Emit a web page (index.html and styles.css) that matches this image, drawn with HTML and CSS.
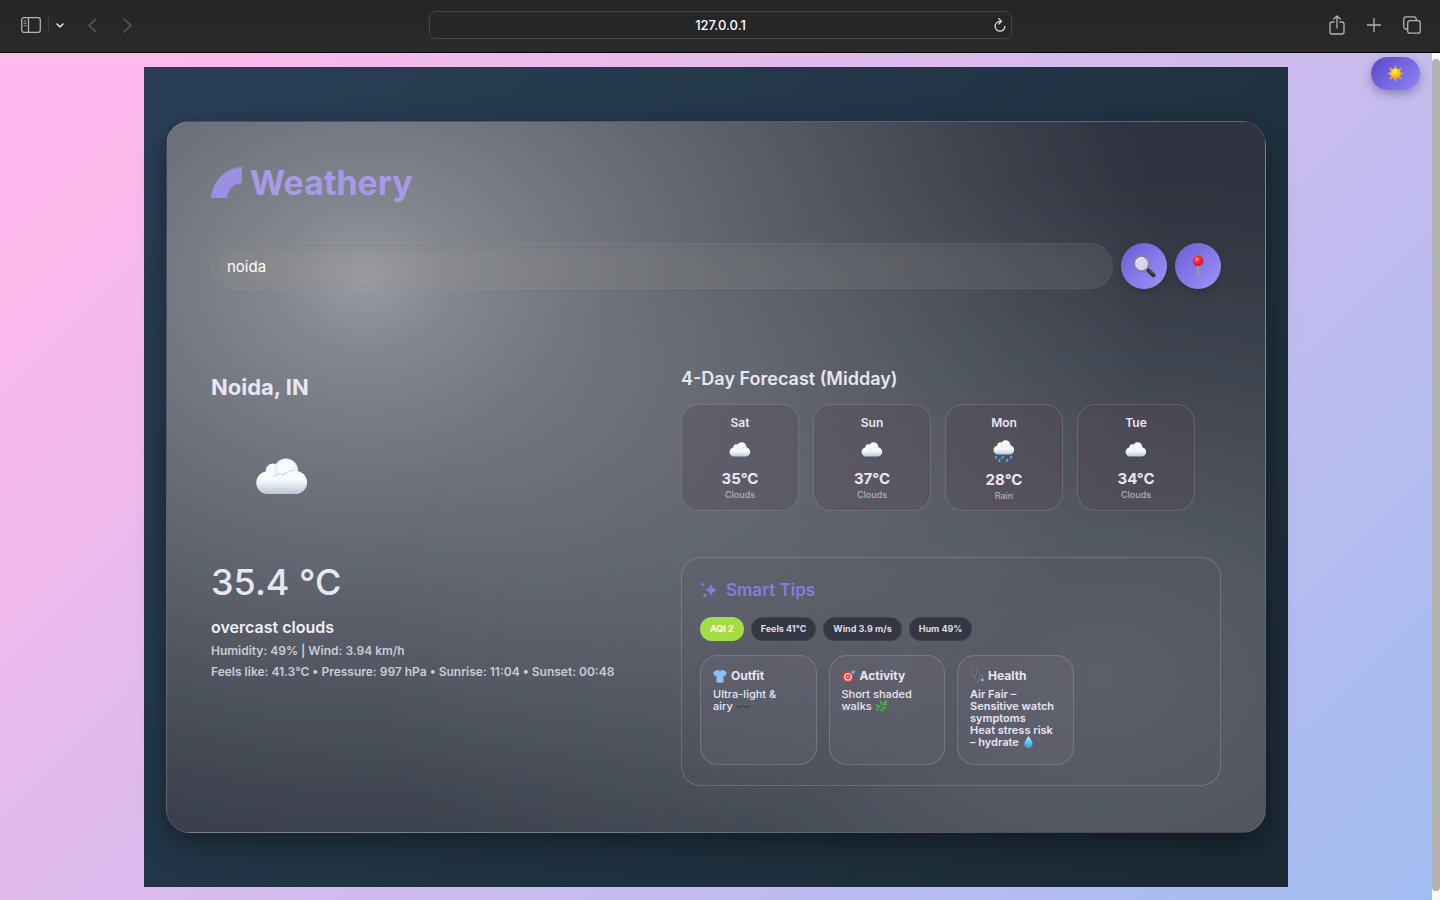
FILE: index.html
```html
<!DOCTYPE html>
<html lang="en">
<head>
<meta charset="utf-8">
<title>Weathery</title>
<link rel="stylesheet" href="styles.css">
</head>
<body>
<svg class="defs" aria-hidden="true">
  <defs>
    <radialGradient id="puff" cx=".5" cy=".4" r=".65"><stop offset=".4" stop-color="#fafcfc"/><stop offset="1" stop-color="#d6e0e7"/></radialGradient>
    <linearGradient id="base" gradientUnits="userSpaceOnUse" x1="0" y1="13" x2="0" y2="36"><stop offset=".4" stop-color="#f8fafb"/><stop offset="1" stop-color="#b9c8d3"/></linearGradient>
    <radialGradient id="sun" cx=".45" cy=".3" r=".75"><stop offset="0" stop-color="#fff23a"/><stop offset=".5" stop-color="#ffcc12"/><stop offset="1" stop-color="#f48a10"/></radialGradient>
    <radialGradient id="pin" cx=".4" cy=".35" r=".65"><stop offset="0" stop-color="#ff9a90"/><stop offset=".35" stop-color="#f2383a"/><stop offset="1" stop-color="#c8161c"/></radialGradient>
    <linearGradient id="drop" x1="0" y1="0" x2="0" y2="1"><stop offset="0" stop-color="#b6f0ff"/><stop offset="1" stop-color="#159be6"/></linearGradient>
    <symbol id="cloud" viewBox="0 0 54 37">
      <circle cx="18" cy="13" r="7.500" fill="url(#puff)"/>
      <circle cx="31" cy="12.500" r="12" fill="url(#puff)"/>
      <path d="M12.500 13.500Q16 13.500 19 16q4-2 8 1 5-5 12-4A11.500 11.500 0 0 1 42 36H12.500a11.250 11.250 0 0 1 0-22.500z" fill="url(#base)"/>
      <path d="M19 18.500q5-4.500 9-1.500 4.500-4.500 11-4.500" fill="none" stroke="#ccd6dd" stroke-width="1.100" stroke-linecap="round"/>
    </symbol>
  </defs>
</svg>

<div class="browser">
  <header class="toolbar">
    <div class="tools">
      <button class="tool" aria-label="Sidebar"><svg width="20" height="16" viewBox="0 0 20 16"><rect x=".7" y=".7" width="18.600" height="14.600" rx="2.200"/><path d="M7.500 1v14"/><path d="M3 4h2M3 6.300h2M3 8.600h2" stroke-width=".9"/></svg></button>
      <span class="rule"></span>
      <button class="tool bright" aria-label="Tab groups"><svg width="8" height="5" viewBox="0 0 8 5"><path d="M1 1l3 2.800L7 1" stroke-width="1.600"/></svg></button>
      <button class="tool dim back" aria-label="Back"><svg width="9" height="15" viewBox="0 0 9 15"><path d="M8 1L1 7.500 8 14"/></svg></button>
      <button class="tool dim forward" aria-label="Forward"><svg width="9" height="15" viewBox="0 0 9 15"><path d="M1 1l7 6.500L1 14"/></svg></button>
    </div>
    <div class="address">
      <input class="url" type="text" value="127.0.0.1" aria-label="Address">
      <button class="tool bright reload" aria-label="Reload"><svg width="12" height="14" viewBox="0 0 12 14"><path d="M6 3.400a4.900 4.900 0 1 0 4.900 4.900M4.800.8l2.700 2.600L4.800 6"/></svg></button>
    </div>
    <div class="tools end">
      <button class="tool" aria-label="Share"><svg width="16" height="20" viewBox="0 0 16 20"><path d="M5 7H3.200C2 7 1 7.700 1 9v8c0 1.200.8 2 2 2h10c1.200 0 2-.8 2-2V9c0-1.300-1-2-2.200-2H11M8 13V1.200M4.800 4L8 1l3.200 3"/></svg></button>
      <button class="tool" aria-label="New tab"><svg width="14" height="14" viewBox="0 0 14 14"><path d="M7 0v14M0 7h14"/></svg></button>
      <button class="tool" aria-label="Tabs"><svg width="18" height="18" viewBox="0 0 18 18"><path d="M4.700 13H3a2.200 2.200 0 0 1-2.200-2.200V3A2.200 2.200 0 0 1 3 .8h8A2.200 2.200 0 0 1 13.200 3v1.600"/><rect x="4.700" y="4.600" width="12.500" height="12.500" rx="2.200"/></svg></button>
    </div>
  </header>

  <div class="viewport">
    <div class="page">
      <button class="theme" aria-label="Toggle theme"><svg width="17" height="17" viewBox="0 0 17 17"><g fill="#fbb31c"><path d="M7.300 3.500L8.500 0l1.200 3.500zM7.300 13.500l1.200 3.500 1.200-3.500zM3.500 7.300L0 8.500l3.500 1.200zM13.500 7.300l3.500 1.200-3.500 1.200zM5.500 3.700L2.300 2.300 3.700 5.500zM11.500 3.700l3.200-1.400-1.400 3.200zM5.500 13.300l-3.200 1.400 1.400-3.200zM11.500 13.300l3.200 1.400-1.400-3.200z"/></g><circle cx="8.500" cy="8.500" r="5.200" fill="url(#sun)"/></svg></button>
      <main class="stage">
        <div class="card">
          <h1 class="brand"><svg width="32" height="32" viewBox="0 0 32 32"><path d="M0 31C2 14 14 1 31 0v16c-8 .5-14 6-15 15z" fill="#9c8fe3"/></svg><span>Weathery</span></h1>
          <form class="search">
            <input class="query" type="text" value="noida" aria-label="City">
            <button class="round" type="button" aria-label="Search"><svg width="23" height="23" viewBox="0 0 23 23"><path d="M13.500 14l2 1.700" stroke="#aaa9ac" stroke-width="2"/><path d="M15.500 15.500l5 4.700" stroke="#2c2e30" stroke-width="4" stroke-linecap="round"/><path d="M16 15l4.500 4.200" stroke="#70716f" stroke-width="1"/><circle cx="8.500" cy="8.700" r="7.300" fill="#d9d4f1" stroke="#85868e" stroke-width="1.600"/><path d="M3 7a6 6 0 0 1 8-4" fill="none" stroke="#f3f2fb" stroke-width="1"/></svg></button>
            <button class="round" type="button" aria-label="Use my location"><svg width="12" height="22" viewBox="0 0 12 22"><path d="M6 10v11" stroke="#a99992" stroke-width="1.700" stroke-linecap="round"/><circle cx="6" cy="5.700" r="5.300" fill="url(#pin)"/></svg></button>
          </form>

          <div class="columns">
            <section class="current">
              <h2>Noida, IN</h2>
              <div class="sky"><svg width="54" height="37"><use href="#cloud"/></svg></div>
              <p class="temp">35.4 °C</p>
              <p class="desc">overcast clouds</p>
              <p class="meta">Humidity: 49% | Wind: 3.94 km/h</p>
              <p class="meta">Feels like: 41.3°C • Pressure: 997 hPa • Sunrise: 11:04 • Sunset: 00:48</p>
            </section>

            <div class="side">
              <h3 class="forecast-title">4-Day Forecast (Midday)</h3>
              <div class="days">
                <article class="day"><h4>Sat</h4><div class="mini"><svg width="22" height="15"><use href="#cloud"/></svg></div><strong>35°C</strong><small>Clouds</small></article>
                <article class="day"><h4>Sun</h4><div class="mini"><svg width="22" height="15"><use href="#cloud"/></svg></div><strong>37°C</strong><small>Clouds</small></article>
                <article class="day"><h4>Mon</h4><div class="mini rain"><svg width="22" height="23" viewBox="0 0 22 23"><use href="#cloud" width="22" height="15"/><g stroke="#3bb2ee" stroke-width="1.900" stroke-linecap="round"><path d="M3.500 16.500l-.7 1.300M10 16.500l-.7 1.300M18.500 16.500l-.7 1.300M6.800 19.800l-.7 1.300M14.500 19.800l-.7 1.300"/></g></svg></div><strong>28°C</strong><small>Rain</small></article>
                <article class="day"><h4>Tue</h4><div class="mini"><svg width="22" height="15"><use href="#cloud"/></svg></div><strong>34°C</strong><small>Clouds</small></article>
              </div>

              <section class="tips">
                <h3 class="tips-title"><svg width="18" height="18" viewBox="0 0 18 18" fill="#8878dc"><path d="M11 2q.8 6.200 6.700 7-5.900.8-6.700 7-.8-6.200-6.700-7Q10.200 8.200 11 2zM2.600.5q.3 2.400 2.500 2.800-2.200.4-2.500 2.800Q2.300 3.700 0 3.300 2.300 2.900 2.600.5zM5 11.800q.4 2.300 2.500 2.700Q5.400 15 5 17.400 4.600 15 2.500 14.500 4.600 14.100 5 11.800z"/></svg>Smart Tips</h3>
                <div class="chips">
                  <span class="chip aqi">AQI 2</span><span class="chip">Feels 41°C</span><span class="chip">Wind 3.9 m/s</span><span class="chip">Hum 49%</span>
                </div>
                <div class="tip-cards">
                  <article class="tip">
                    <h4><svg width="14" height="14" viewBox="0 0 14 14"><path d="M4.500.8q2.500 2 5 0L13.800 3l-1.400 4-1.900-.4v6.800h-7V6.600L1.600 7 .2 3z" fill="#8cc0f0"/><path d="M4.500.8q2.500 3 5 0" fill="none" stroke="#5f98cb" stroke-width=".8"/></svg>Outfit</h4>
                    <p>Ultra-light &amp;<br>airy <svg class="glyph" width="14" height="12" viewBox="0 0 14 12"><path d="M0 4.500h14l-.6 2.200Q12.500 9 10 8.700 8 8.500 7.500 6h-1Q6 8.500 4 8.700 1.500 9 .6 6.700z" fill="#4c4e4f"/><path d="M1 4.500h5M8 4.500h5" stroke="#75787a" stroke-width=".7"/></svg></p>
                  </article>
                  <article class="tip">
                    <h4><svg width="14" height="14" viewBox="0 0 14 14"><circle cx="6" cy="7.800" r="5.600" fill="#e33b3a"/><circle cx="6" cy="7.800" r="3.900" fill="#f2dedc"/><circle cx="6" cy="7.800" r="2.500" fill="#df3538"/><circle cx="6" cy="7.800" r="1" fill="#fff"/><path d="M6 7.800l5-4.300" stroke="#5b8398" stroke-width="1"/><path d="M9.500 2.500L11.800.4l.2 1.800 2 .2-2.200 2.400-2.500.2z" fill="#46c0d0"/></svg>Activity</h4>
                    <p>Short shaded walks <svg class="glyph" width="13" height="13" viewBox="0 0 13 13"><path d="M2 12.500Q5 7 10 2" fill="none" stroke="#329c35" stroke-width="1"/><g fill="#48b43d"><path d="M9 4.500Q8 1 12.500 0q.5 4-3.500 4.500zM7 6Q3.800 4 5.500.5 8.700 2.500 7 6zM5 8.500Q.5 8.500 0 4.500 4.800 4.300 5 8.500zM8 6q1.500-2.800 5-1.300Q11.500 7.500 8 6zM6.500 8.500q2-2.500 5.500.2-3 2.300-5.500-.2zM4.500 10.500q3-1.800 5 1.300-3.300 1.400-5-1.300zM3 11.500Q.5 12 0 9.300q2.500-.6 3 2.200z"/></g></svg></p>
                  </article>
                  <article class="tip health">
                    <h4><svg width="14" height="14" viewBox="0 0 14 14" fill="none" stroke="#7b7c83" stroke-width=".8"><path d="M2 .8H.8Q.5 7 4 7t3-6.200H5.800M4 7q0 6 3 6t2.500-5.500Q10 5 11.800 5.500t.7 4"/><circle cx="12.300" cy="11" r="1.200" fill="#c6c7ca" stroke="none"/></svg>Health</h4>
                    <p>Air Fair – Sensitive watch symptoms<br>Heat stress risk – hydrate <svg class="glyph" width="13" height="13" viewBox="0 0 13 13"><path d="M6.500 0Q11 6 11 8.800a4.300 4.300 0 0 1-9 0Q2 6 6.500 0z" fill="url(#drop)"/></svg></p>
                  </article>
                </div>
              </section>
            </div>
          </div>
        </div>
      </main>
    </div>
    <div class="scroll"><div class="thumb"></div></div>
  </div>
</div>
</body>
</html>
```
FILE: styles.css
```css
* { box-sizing: border-box; }
body { margin: 0; font-family: Inter, "Open Sans", sans-serif; color: #e8e6f2; }
h1, h2, h3, h4, p { margin: 0; }
button { border: 0; padding: 0; background: none; cursor: pointer; }
svg { display: block; flex: none; }
.defs { position: absolute; width: 0; height: 0; }

.browser { min-height: 100vh; display: flex; flex-direction: column; }
.toolbar {
  display: grid; grid-template-columns: 1fr 583px 1fr; align-items: center;
  height: 53px; padding: 0 19px 2px;
  background: linear-gradient(#242426, #2b292b);
  border-bottom: 1px solid #000;
}
.tools { display: flex; align-items: center; padding-left: 2px; }
.end { justify-content: flex-end; gap: 22px; padding: 0; }
.tool { display: flex; }
.tool svg { fill: none; stroke: #b3b3b4; stroke-width: 1.3; stroke-linecap: round; stroke-linejoin: round; }
.bright svg { stroke: #dcdcdd; }
.dim svg { stroke: #5a5a5c; stroke-width: 1.5; }
.rule { width: 1px; height: 18px; margin: 0 7px; background: #3d3d3f; }
.back { margin-left: 24px; }
.forward { margin-left: 26px; }
.address {
  display: flex; align-items: center; height: 28px; padding: 0 5px 0 18px;
  border: 1px solid #464648; border-radius: 7px; background: #262628;
}
.url {
  flex: 1; min-width: 0; border: 0; background: none; outline: 0; color: #fff;
  font: 500 13px Inter, sans-serif; text-align: center;
}

.viewport { flex: 1; display: flex; }
.page {
  position: relative; flex: 1; min-width: 0; padding: 14px 144px 13px;
  background: linear-gradient(135deg, #ffb9ec 8%, #a0bdf1 100%);
}
.scroll { width: 8px; padding: 6px 0 9px; background: #f8f8f9; }
.thumb { height: 100%; border-radius: 4px; background: #b1b1b1; }
.theme {
  position: absolute; top: 4px; right: 12px; width: 49px; height: 33px;
  display: grid; place-items: center; border-radius: 17px;
  background: linear-gradient(135deg, #5848c8, #9283fb);
  box-shadow: 0 4px 10px rgba(40, 30, 80, .35);
}

.stage { padding: 54px 22px; background: linear-gradient(135deg, #2a3f57, #213444 50%, #1a2934); }
.card {
  padding: 40px 44px 46px; border: 1px solid rgba(255, 255, 255, .1); border-radius: 24px;
  background:
    radial-gradient(ellipse 72% 90% at 18% 22%, rgba(248, 250, 252, .52) 0%, rgba(248, 250, 252, .42) 11%, rgba(248, 250, 252, .33) 28%, rgba(248, 250, 252, .2) 55%, rgba(248, 250, 252, .07) 82%, transparent 100%),
    radial-gradient(ellipse 65% 70% at 85% 78%, rgba(248, 250, 252, .22) 0%, rgba(248, 250, 252, .17) 30%, rgba(248, 250, 252, .06) 72%, transparent 100%),
    linear-gradient(#2e333f, #313743);
  box-shadow: 0 10px 28px rgba(0, 0, 0, .4);
}
.brand { display: flex; align-items: center; gap: 7px; height: 42px; color: #a79be8; font-size: 34px; line-height: 42px; font-weight: 700; }
.search { display: flex; gap: 8px; margin-top: 39px; }
.query {
  flex: 1; min-width: 0; height: 46px; padding: 0 15px; border: 1px solid rgba(255, 255, 255, .03); border-radius: 23px; outline: 0;
  background: rgba(160, 155, 145, .16); box-shadow: inset 0 2px 8px rgba(0, 0, 0, .08), inset 0 0 6px rgba(255, 255, 255, .05);
  color: #fff; font: 400 15px Inter, sans-serif;
}
.round {
  width: 46px; height: 46px; display: grid; place-items: center; border-radius: 50%;
  background: linear-gradient(135deg, #6a5bd3, #a094fa); box-shadow: 0 3px 8px rgba(0, 0, 0, .2);
}
.columns { display: grid; grid-template-columns: 5fr 6fr; gap: 20px; margin-top: 78px; }

.current { padding-top: 4px; white-space: nowrap; }
.current h2 { font-size: 22px; line-height: 32px; font-weight: 700; }
.sky { display: grid; place-items: center; width: 142px; height: 142px; margin-top: 2px; }
.temp { margin-top: 10px; font-size: 36px; line-height: 50px; font-weight: 500; }
.desc { margin-top: 8px; font-size: 16px; line-height: 24px; font-weight: 600; color: #f0eff7; }
.meta { font-size: 12px; line-height: 21px; font-weight: 600; color: #cccbd6; }
.desc + .meta { margin-top: 1px; }

.forecast-title { font-size: 18px; line-height: 24px; font-weight: 600; }
.days { display: grid; grid-template-columns: repeat(4, 118px); gap: 14px; margin-top: 13px; }
.day {
  display: flex; flex-direction: column; align-items: center; height: 107px; padding-top: 9px;
  border: 1px solid rgba(255, 255, 255, .14); border-radius: 18px; background: rgba(85, 68, 82, .32);
}
.day h4 { font-size: 12px; line-height: 18px; font-weight: 600; }
.mini { display: grid; place-items: center; height: 15px; margin: 10px 0 12px; }
.rain { height: 23px; margin: 8px 0 7px; }
.day strong { font-size: 15px; line-height: 20px; font-weight: 700; }
.day small { font-size: 9px; line-height: 12px; font-weight: 500; color: #b2b0ba; }

.tips { margin-top: 46px; padding: 18px 18px 20px; border: 1px solid rgba(255, 255, 255, .17); border-radius: 20px; background: rgba(90, 85, 90, .14); }
.tips-title { display: flex; align-items: center; gap: 8px; font-size: 17px; line-height: 28px; font-weight: 600; color: #8a7ae0; }
.chips { display: flex; align-items: center; gap: 7px; margin-top: 13px; }
.chip { padding: 0 9px; border-radius: 12px; border: 1px solid rgba(255, 255, 255, .06); background: #343642; font-size: 9px; line-height: 22px; font-weight: 700; color: #dedce8; }
.aqi { background: #a3dc45; color: #fff; }
.tip-cards { display: grid; grid-template-columns: repeat(4, 1fr); gap: 12px; margin-top: 14px; }
.tip { min-height: 110px; padding: 11px 12px 16px; border: 1px solid rgba(255, 255, 255, .16); border-radius: 18px; background: rgba(120, 115, 140, .18); }
.tip h4 { display: flex; align-items: center; gap: 4px; font-size: 12px; line-height: 18px; font-weight: 700; }
.tip p { margin-top: 3px; font-size: 11px; line-height: 12px; font-weight: 500; }
.health p { font-weight: 600; }
.glyph { display: inline-block; height: 12px; vertical-align: top; }
```
